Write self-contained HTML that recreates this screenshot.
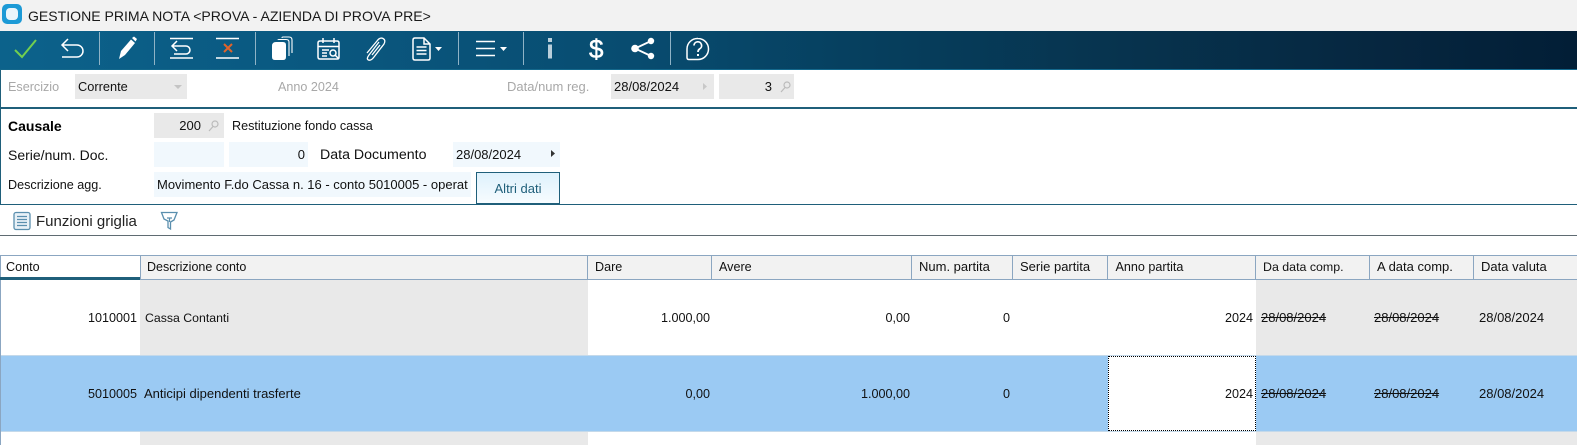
<!DOCTYPE html>
<html lang="it"><head><meta charset="utf-8"><title>Gestione Prima Nota</title>
<style>
html,body{margin:0;padding:0;background:#fff}
#p{position:relative;width:1577px;height:445px;overflow:hidden;background:#fff;font-family:"Liberation Sans",sans-serif;font-size:13px;color:#111}
#p div{position:absolute;box-sizing:border-box}
.t{white-space:nowrap;line-height:16px;height:16px}
.r{text-align:right}
.n{font-size:12.6px}
.g{background:#e9e9e9}
.b{background:#f1f8fd}
.lab{color:#a8a8a8}
.h{top:256px;height:24px;background:#f2f2f2;border-right:1px solid #8ba6c1;border-bottom:1px solid #8ba6c1}
.ht{top:259px}
.s{text-decoration:line-through}
svg{position:absolute;left:0;top:0}
</style></head><body><div id="p">
<div style="left:0;top:0;width:1577px;height:31px;background:#f2f2f2"></div>
<div style="left:2px;top:4px;width:20px;height:20px;background:#1d9ad6;border-radius:5px"></div>
<div style="left:6px;top:8px;width:12px;height:12px;background:#eaf5fb;border-radius:4px"></div>
<div class="t" style="left:28px;top:7px;font-size:14.05px;color:#1a1a1a;line-height:18px;height:18px">GESTIONE PRIMA NOTA &lt;PROVA - AZIENDA DI PROVA PRE&gt;</div>

<div style="left:0;top:31px;width:1577px;height:39px;background:linear-gradient(90deg,#0c628b 0%,#0a5880 20%,#084c70 40%,#063f5e 55%,#07344f 70%,#06263f 88%,#021e36 100%);border-bottom:1px solid #14688c"></div>
<svg width="1577" height="70" viewBox="0 0 1577 70" fill="none" stroke="#fff" stroke-width="1.5">
<g stroke="#8fb3c6" stroke-width="1"><path d="M99.5 32V65M154.5 32V65M255.5 32V65M458.5 32V65M523.5 32V65M670.5 32V65"/></g>
<path d="M15 50L22 57L36 40" stroke="#72cf4f" stroke-width="2"/>
<path d="M68 39L62 45L68 51M62 45H77A5.500 5.500 0 0 1 77 57H62"/>
<path d="M119 59L121 51L131 39.500L135 43L125 55Z" fill="#fff" stroke="none"/><path d="M132 38L134 36.500L137 39L135.500 41.500Z" fill="#fff" stroke="none"/>
<path d="M170 38.500H193M170 58H193M177 41L172 46L177 51M172 46H186A4 4 0 0 1 186 54H174"/>
<path d="M216 38.500H239M216 58H239"/><path d="M224 44L232 52M232 44L224 52" stroke="#e0632a" stroke-width="2"/>
<path d="M276 42H283Q286 42 286 45V57Q286 60 283 60H275Q272 60 272 57V46Q272 42 276 42Z" fill="#fff" stroke="none"/>
<path d="M278 40Q278 39.500 279 39.500H286Q289 39.500 289 42V56" stroke-width="1.100"/>
<path d="M282 38Q282 37 283 37H289Q292 37 292 40V53" stroke-width="1.100"/>
<path d="M320 41H337Q339 41 339 43V57Q339 59 337 59H320Q318 59 318 57V43Q318 41 320 41ZM318 46.500H339M323 38V43M334 38V43"/>
<path d="M322 50H329M322 53H327M322 56H327"/><circle cx="333" cy="53" r="3"/><path d="M335 55L339 59"/>
<path d="M379 42L369 55Q366 59 368.500 60Q371 61 374 57L384 44Q386 40 383 38.500Q380 37 377 41L367 53" stroke-width="1.300"/><path d="M380 45L372 55" stroke-width="1.300"/>
<path d="M413 40Q413 38 415 38H424L430 44V58Q430 60 428 60H415Q413 60 413 58ZM424 38V44H430"/>
<path d="M416.500 47H426.500M416.500 50.500H426.500M416.500 54H426.500"/>
<path d="M435 47H442L438.500 51Z" fill="#fff" stroke="none"/>
<path d="M476 41.500H495M476 48.500H495M476 55.500H495" stroke-width="1.600"/>
<path d="M500 47H507L503.500 51Z" fill="#fff" stroke="none"/>
<path d="M548 38H552V42H548ZM548 44.500H552V58.500H548Z" fill="#b9cfdb" stroke="none"/>
<circle cx="651" cy="41" r="3.200" fill="#fff" stroke="none"/><circle cx="651" cy="56" r="3.200" fill="#fff" stroke="none"/><circle cx="635" cy="48.500" r="3.800" fill="#fff" stroke="none"/>
<path d="M635 48.500L651 41M635 48.500L651 56" stroke-width="1.800"/>
<path d="M698 38.500A10.500 10.500 0 0 1 698 59.500H689Q687 59.500 687 57.500V49A10.500 10.500 0 0 1 698 38.500Z"/>
<path d="M694 45.500A3.800 3.800 0 1 1 699.500 49Q698 50 698 52" stroke-width="1.700"/><path d="M697 54H699V56H697Z" fill="#fff" stroke="none"/>
</svg>
<div class="t" style="left:589px;top:35px;font-size:26px;color:#fff;line-height:28px;height:28px;-webkit-text-stroke:.5px #fff">$</div>

<div style="left:0;top:70px;width:1px;height:135px;background:#1f5f7a"></div>
<div style="left:0;top:107px;width:1577px;height:2px;background:#1f5f7a"></div>
<div style="left:0;top:204px;width:1577px;height:1px;background:#1f5f7a"></div>

<div class="g" style="left:75px;top:74px;width:112px;height:25px"></div>
<div class="g" style="left:611px;top:74px;width:103px;height:25px"></div>
<div class="g" style="left:719px;top:74px;width:75px;height:25px"></div>
<div class="g" style="left:154px;top:113px;width:70px;height:25px"></div>
<div class="b" style="left:154px;top:142px;width:70px;height:25px"></div>
<div class="b" style="left:229px;top:142px;width:79px;height:25px"></div>
<div class="b" style="left:453px;top:142px;width:107px;height:25px"></div>
<div class="b" style="left:154px;top:172px;width:317px;height:25px"></div>

<svg width="1577" height="210" viewBox="0 0 1577 210"><path d="M174 85H182L178 89Z" fill="#c4c4c4"/><path d="M703 83V90L707 86.500Z" fill="#c8c8c8"/><path d="M551 150V157L555 153.500Z" fill="#333"/>
<g fill="none" stroke="#bbb" stroke-width="1.200"><circle cx="787" cy="85" r="3"/><path d="M785 87.500L781 92"/><circle cx="215" cy="124" r="3"/><path d="M213 126.500L209 131"/></g></svg>

<div class="t lab" style="left:8px;top:79px;font-size:12.6px">Esercizio</div>
<div class="t" style="left:78px;top:79px;font-size:12.8px">Corrente</div>
<div class="t lab" style="left:278px;top:79px;font-size:12.6px">Anno 2024</div>
<div class="t lab" style="left:507px;top:79px">Data/num reg.</div>
<div class="t" style="left:614px;top:79px">28/08/2024</div>
<div class="t r" style="left:719px;top:79px;width:53px">3</div>

<div class="t" style="left:8px;top:118px;font-size:14px;font-weight:bold;color:#000">Causale</div>
<div class="t r" style="left:154px;top:118px;width:47px">200</div>
<div class="t" style="left:232px;top:118px;font-size:12.6px">Restituzione fondo cassa</div>
<div class="t" style="left:8px;top:147px;font-size:14px">Serie/num. Doc.</div>
<div class="t r" style="left:229px;top:147px;width:76px">0</div>
<div class="t" style="left:320px;top:147px;font-size:14.2px">Data Documento</div>
<div class="t" style="left:456px;top:147px">28/08/2024</div>
<div class="t" style="left:8px;top:177px;font-size:12.6px">Descrizione agg.</div>
<div class="t" style="left:157px;top:177px;width:311px;overflow:hidden">Movimento F.do Cassa n. 16 - conto 5010005 - operatore</div>
<div style="left:476px;top:172px;width:84px;height:32px;border:1px solid #1f5f7a;background:linear-gradient(#def1fc,#f7fcff)"></div>
<div class="t" style="left:476px;top:181px;width:84px;text-align:center;color:#1f5f7a">Altri dati</div>

<svg width="1577" height="240" viewBox="0 0 1577 240" fill="none" stroke="#5a8fae">
<rect x="14" y="212.500" width="16" height="17" rx="2" stroke-width="1.300" fill="#e8f1f7"/>
<path d="M17 216.500H27M17 219.500H27M17 222.500H27M17 225.500H27" stroke-width="1.200"/>
<path d="M161.500 212.500H177L174 220L170.500 222V229L168 227.500V221L164 219Z" stroke-width="1.300"/>
<path d="M167 218H172M169.500 218V222" stroke-width="1.200"/>
</svg>
<div class="t" style="left:36px;top:214px;font-size:15px;color:#222">Funzioni griglia</div>
<div style="left:0;top:235px;width:1577px;height:1px;background:#5f6b72"></div>

<div style="left:0;top:255px;width:1577px;height:1px;background:#8ba6c1"></div>
<div style="left:0;top:255px;width:1px;height:190px;background:#8ba6c1"></div>
<div style="left:1px;top:256px;width:139px;height:24px;background:#fff"></div>
<div style="left:0;top:277px;width:140px;height:3px;background:#1f5f7a"></div>
<div class="h" style="left:140px;width:448px;border-left:1px solid #8ba6c1"></div>
<div class="h" style="left:588px;width:124px"></div>
<div class="h" style="left:712px;width:200px"></div>
<div class="h" style="left:912px;width:101px"></div>
<div class="h" style="left:1013px;width:95px"></div>
<div class="h" style="left:1108px;width:148px"></div>
<div class="h" style="left:1256px;width:114px"></div>
<div class="h" style="left:1370px;width:104px"></div>
<div class="h" style="left:1474px;width:103px;border-right:0"></div>
<div class="t ht" style="left:6px;font-size:12.6px">Conto</div>
<div class="t ht" style="left:147px;font-size:12.5px">Descrizione conto</div>
<div class="t ht" style="left:595px;font-size:12.6px">Dare</div>
<div class="t ht" style="left:719px;font-size:12.6px">Avere</div>
<div class="t ht" style="left:919px;font-size:13px">Num. partita</div>
<div class="t ht" style="left:1020px;font-size:13px">Serie partita</div>
<div class="t ht" style="left:1115.500px;font-size:12.6px">Anno partita</div>
<div class="t ht" style="left:1263px;font-size:12.4px">Da data comp.</div>
<div class="t ht" style="left:1377px;font-size:13px">A data comp.</div>
<div class="t ht" style="left:1481px;font-size:13px">Data valuta</div>

<div class="g" style="left:140px;top:280px;width:448px;height:75px"></div>
<div class="g" style="left:1256px;top:280px;width:321px;height:75px"></div>
<div style="left:1px;top:355px;width:1576px;height:77px;background:#9bcaf3;border-top:1px solid #c4d9ea;border-bottom:1px solid #c4d9ea"></div>
<div style="left:1108px;top:356px;width:148px;height:75px;background:#fff;border:1px dotted #000"></div>
<div class="g" style="left:140px;top:432px;width:448px;height:13px"></div>
<div class="g" style="left:1256px;top:432px;width:321px;height:13px"></div>

<div class="t r n" style="left:40px;top:310px;width:97px">1010001</div>
<div class="t" style="left:145px;top:310px;font-size:12.3px">Cassa Contanti</div>
<div class="t r n" style="left:610px;top:310px;width:100px">1.000,00</div>
<div class="t r n" style="left:810px;top:310px;width:100px">0,00</div>
<div class="t r n" style="left:910px;top:310px;width:100px">0</div>
<div class="t r n" style="left:1153px;top:310px;width:100px">2024</div>
<div class="t s" style="left:1261px;top:310px">28/08/2024</div>
<div class="t s" style="left:1374px;top:310px">28/08/2024</div>
<div class="t" style="left:1479px;top:310px">28/08/2024</div>

<div class="t r n" style="left:40px;top:386px;width:97px">5010005</div>
<div class="t" style="left:144px;top:386px">Anticipi dipendenti trasferte</div>
<div class="t r n" style="left:610px;top:386px;width:100px">0,00</div>
<div class="t r n" style="left:810px;top:386px;width:100px">1.000,00</div>
<div class="t r n" style="left:910px;top:386px;width:100px">0</div>
<div class="t r n" style="left:1153px;top:386px;width:100px">2024</div>
<div class="t s" style="left:1261px;top:386px">28/08/2024</div>
<div class="t s" style="left:1374px;top:386px">28/08/2024</div>
<div class="t" style="left:1479px;top:386px">28/08/2024</div>
</div></body></html>
